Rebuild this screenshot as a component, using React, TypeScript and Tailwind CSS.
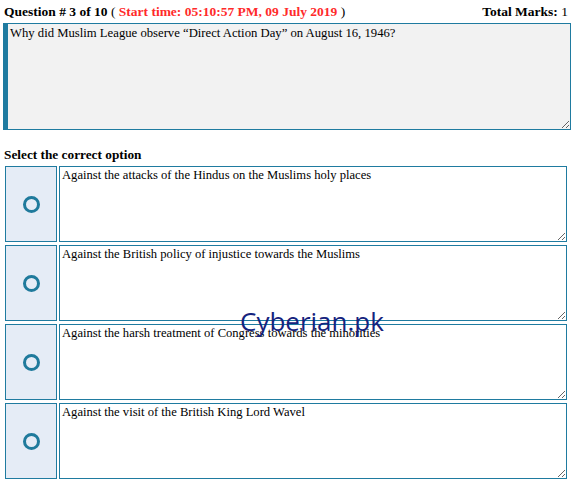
const options = [
  "Against the attacks of the Hindus on the Muslims holy places",
  "Against the British policy of injustice towards the Muslims",
  "Against the harsh treatment of Congress towards the minorities",
  "Against the visit of the British King Lord Wavel",
];

export default function App() {
  return (
    <div className="relative w-[575px] h-[485px] bg-white px-[3px] pt-[4px] font-['Liberation_Serif',serif] text-black">
      <div className="flex items-center justify-between pl-[1px] pr-[4px] text-[13.5px] font-bold leading-[16px]">
        <div>
          Question # 3 of 10 <span className="font-normal">(</span>{" "}
          <span className="text-[#ff2a2a]">Start time: 05:10:57 PM, 09 July 2019</span>{" "}
          <span className="font-normal">)</span>
        </div>
        <div>
          Total Marks: <span className="font-normal">1</span>
        </div>
      </div>

      <textarea
        readOnly
        defaultValue={"Why did Muslim League observe \u201cDirect Action Day\u201d on August 16, 1946?"}
        className="mt-[3px] block w-[568px] h-[107px] resize-y border border-l-[5px] border-[#1f7ba0] bg-[#f2f2f2] px-[2px] pt-[1px] text-[12.7px] leading-[16px] outline-none font-['Liberation_Serif',serif]"
      />

      <div className="mt-[17px] pl-[1px] text-[13.3px] font-bold leading-[16px]">Select the correct option</div>

      <div className="mt-[3px] flex flex-col gap-[3px] pl-[2px]">
        {options.map((opt) => (
          <div key={opt} className="flex gap-[2px] h-[76px]">
            <div className="flex w-[52px] items-center justify-center border border-[#1f7ba0] bg-[#e5ecf6]">
              <div className="h-[17px] w-[17px] rounded-full border-[3.5px] border-[#1f7a9c]" />
            </div>
            <textarea
              readOnly
              defaultValue={opt}
              className="block w-[508px] h-[76px] resize-y border border-[#1f7ba0] bg-white px-[2px] pt-[1px] text-[12.6px] leading-[15px] outline-none font-['Liberation_Serif',serif]"
            />
          </div>
        ))}
      </div>

      <div className="pointer-events-none absolute left-[240px] top-[306px] font-['Open_Sans',sans-serif] text-[26px] leading-[30px] text-[#15237e]">
        Cyberian.pk
      </div>
    </div>
  );
}
